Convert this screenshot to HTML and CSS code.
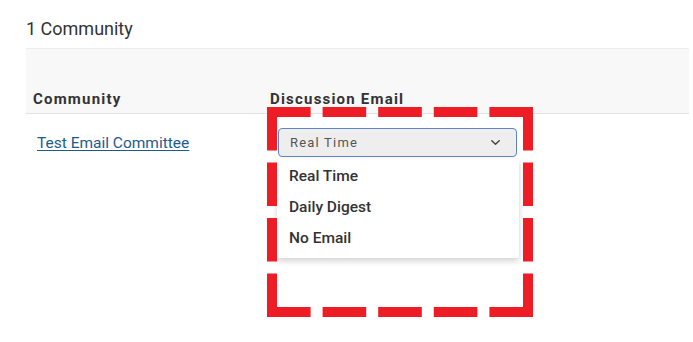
FILE: index.html
```html
<!DOCTYPE html>
<html>
<head>
<meta charset="utf-8">
<link rel="stylesheet" href="styles.css">
</head>
<body>
<div class="page">
  <h1 class="title">1 Community</h1>
  <div class="table">
    <div class="thead">
      <div class="th th-community">Community</div>
      <div class="th th-email">Discussion Email</div>
    </div>
    <div class="row">
      <div class="cell cell-community"><a href="#" class="link">Test Email Committee</a></div>
      <div class="cell cell-email">
        <div class="select-wrap">
          <div class="select">
            <span class="select-value">Real Time</span>
            <svg class="chevron" width="9" height="5" viewBox="0 0 9 5"><path d="M0.8 0.8 L4.5 4.2 L8.2 0.8" fill="none" stroke="#444" stroke-width="1.5" stroke-linecap="round" stroke-linejoin="round"/></svg>
          </div>
          <ul class="menu">
            <li class="menu-item">Real Time</li>
            <li class="menu-item">Daily Digest</li>
            <li class="menu-item">No Email</li>
          </ul>
        </div>
      </div>
    </div>
  </div>
</div>
<svg class="annotation" width="693" height="342" viewBox="0 0 693 342">
  <g stroke="#ee1c25" stroke-width="10" fill="none">
    <line x1="267" y1="112" x2="533" y2="112" stroke-dasharray="43.6 12"/>
    <line x1="267" y1="312" x2="533" y2="312" stroke-dasharray="43.6 12"/>
    <line x1="272" y1="107" x2="272" y2="317" stroke-dasharray="43.5 12"/>
    <line x1="528" y1="107" x2="528" y2="317" stroke-dasharray="43.5 12"/>
  </g>
</svg>
</body>
</html>
```

FILE: styles.css
```css
html, body {
  margin: 0;
  padding: 0;
  background: #ffffff;
}
body {
  font-family: Roboto, "Liberation Sans", Arial, sans-serif;
  color: #333333;
  width: 693px;
  height: 342px;
  overflow: hidden;
  position: relative;
}
.page {
  padding: 18px 4px 0 26px;
}
.title {
  margin: 0;
  font-size: 18px;
  font-weight: 400;
  line-height: 22px;
  color: #333333;
  height: 30px;
}
.table {
  width: 663px;
}
.thead {
  display: grid;
  grid-template-columns: 237px 1fr;
  align-items: end;
  height: 64px;
  background: #f8f8f8;
  border-top: 1px solid #ededed;
  border-bottom: 1px solid #e3e3e3;
  box-sizing: content-box;
}
.th {
  font-size: 15px;
  font-weight: 700;
  letter-spacing: 1.2px;
  color: #333333;
  padding: 0 0 5px 7px;
  line-height: 18px;
}
.row {
  display: grid;
  grid-template-columns: 237px 1fr;
  padding-top: 14px;
}
.cell-community {
  padding-left: 11px;
  padding-top: 5px;
}
.link {
  color: #1d5b8e;
  font-size: 15.5px;
  line-height: 18px;
  text-decoration: underline;
  text-underline-offset: 2px;
}
.cell-email {
  padding-left: 15px;
}
.select-wrap {
  position: relative;
  width: 239px;
}
.select {
  box-sizing: border-box;
  height: 29px;
  border: 1.5px solid #5b85c6;
  border-radius: 4px;
  background: #eeeeee;
  display: flex;
  align-items: center;
  justify-content: space-between;
  padding: 0 16px 0 11px;
}
.select-value {
  font-size: 13px;
  letter-spacing: 1.2px;
  color: #555555;
}
.chevron {
  display: block;
}
.menu {
  position: absolute;
  left: -1px;
  top: 31px;
  width: 242px;
  margin: 0;
  padding: 2px 0 4px;
  list-style: none;
  background: #ffffff;
  box-shadow: 0 3px 6px rgba(0, 0, 0, 0.18);
  border-radius: 2px;
}
.menu-item {
  height: 31px;
  line-height: 31px;
  padding-left: 12px;
  font-size: 15.5px;
  font-weight: 500;
  color: #333333;
}
.annotation {
  position: absolute;
  left: 0;
  top: 0;
  pointer-events: none;
}
```
